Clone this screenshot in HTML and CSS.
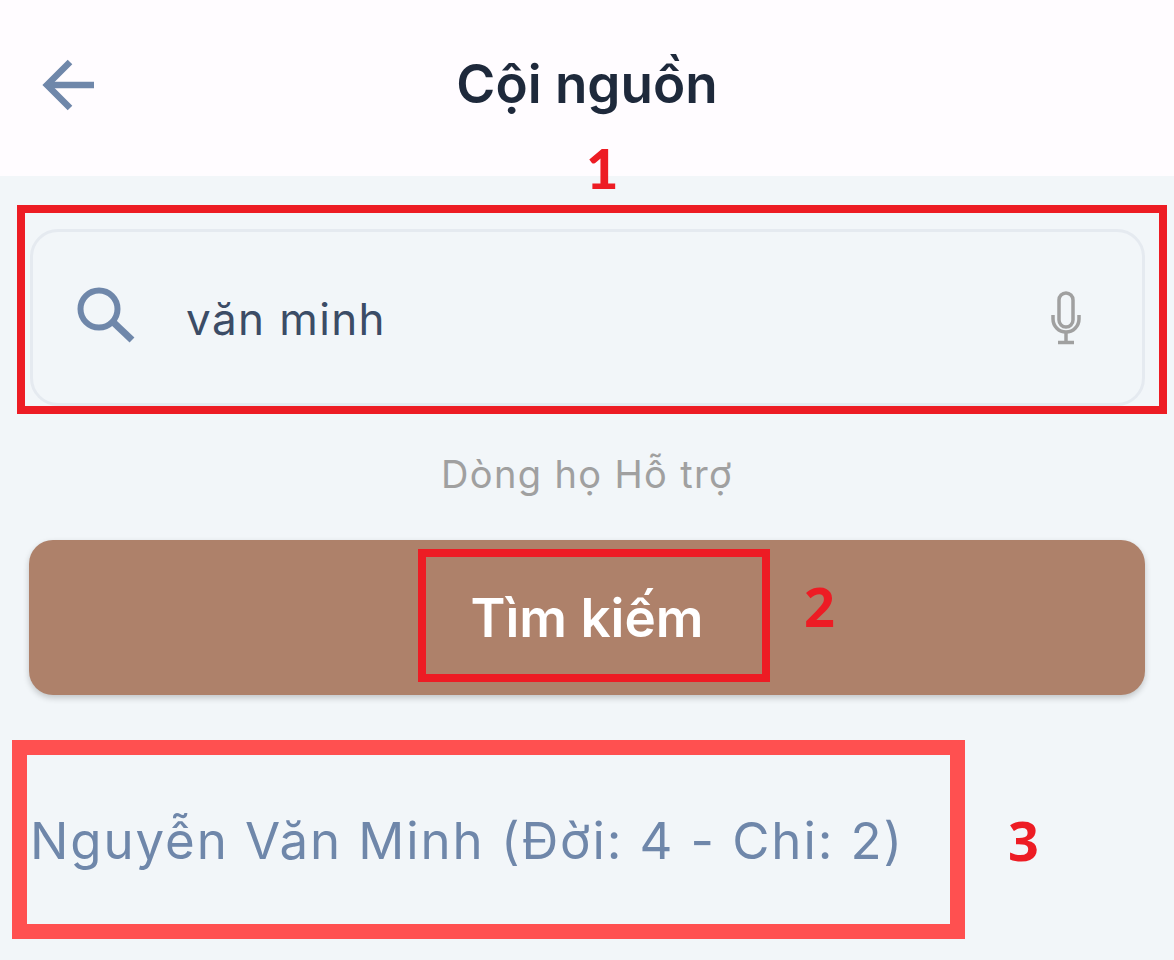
FILE: index.html
```html
<!DOCTYPE html>
<html lang="en">
<head>
  <meta charset="UTF-8" />
  <title>Cội nguồn</title>
  <meta name="viewport" content="width=device-width, initial-scale=1.0" />
  <link rel="stylesheet" href="styles.css">
</head>
<body>

<div class="app">
  <header class="app-bar">
    <svg class="back-icon" viewBox="0 0 56 56" fill="none" stroke="#6f87aa" stroke-width="6.5">
      <path d="M29 4 L6 27 L29 50" />
      <path d="M6 27 H53" />
    </svg>
    <h1 class="title">Cội nguồn</h1>
  </header>

  <main class="content">
    <div class="search-box">
      <svg class="search-icon" viewBox="0 0 58 58" fill="none" stroke="#6f87aa">
        <circle cx="22" cy="22" r="18.5" stroke-width="6" />
        <path d="M36 35 L55 53" stroke-width="7" />
      </svg>
      <span class="search-text">văn minh</span>
      <svg class="mic-icon" viewBox="0 0 32 54" fill="none" stroke="#a0a0a0" stroke-width="3.5">
        <rect x="9" y="2" width="14" height="34" rx="7" />
        <path d="M3 24 V28 A13 13 0 0 0 29 28 V24" />
        <path d="M16 42 V51" />
        <path d="M8 51.5 H24" />
      </svg>
    </div>

    <p class="clan-name">Dòng họ Hỗ trợ</p>

    <button class="search-btn">Tìm kiếm</button>

    <p class="result">Nguyễn Văn Minh (Đời: 4 - Chi: 2)</p>
  </main>

  <!-- red notes drawn on top of the screen -->
  <div class="mark mark-1"></div>
  <div class="mark mark-2"></div>
  <div class="mark mark-3"></div>
  <span class="num num-1">1</span>
  <span class="num num-2">2</span>
  <span class="num num-3">3</span>
</div>

</body>
</html>
```

FILE: styles.css
```css
* {
  box-sizing: border-box;
}
body {
  margin: 0;
  background: #f2f6f9;
  font-family: 'Inter', sans-serif;
}
.app {
  position: relative;
  width: 1174px;
  height: 960px;
  overflow: hidden;
}
.app-bar {
  height: 176px;
  background: #fffcff;
  display: flex;
  align-items: center;
  justify-content: center;
  position: relative;
  padding-bottom: 8px;
}
.back-icon {
  position: absolute;
  left: 41px;
  top: 58px;
  width: 56px;
  height: 56px;
}
.title {
  margin: 0;
  font-size: 53px;
  font-weight: 600;
  color: #1e293b;
}
.content {
  padding: 53px 29px 0 29px;
}
.search-box {
  height: 177px;
  margin-left: 1px;
  border: 3px solid #e5eaf0;
  border-radius: 28px;
  display: flex;
  align-items: center;
  padding: 0 60px 0 44px;
}
.search-icon {
  width: 58px;
  height: 58px;
  margin-top: -3px;
}
.search-text {
  flex: 1;
  margin-left: 51px;
  margin-top: 3px;
  font-size: 44px;
  font-weight: 400;
  color: #3b4c66;
  letter-spacing: 1.4px;
}
.mic-icon {
  width: 32px;
  height: 54px;
}
.clan-name {
  margin: 45px 0 0 0;
  text-align: center;
  font-size: 38px;
  line-height: 46px;
  color: #a0a0a0;
  letter-spacing: 1.35px;
}
.search-btn {
  display: block;
  width: 100%;
  height: 155px;
  margin-top: 43px;
  border: none;
  border-radius: 24px;
  background: #ae816a;
  color: white;
  font-family: 'Inter', sans-serif;
  font-size: 53px;
  font-weight: 600;
  box-shadow: 0 3px 6px rgba(0,0,0,0.2);
}
.result {
  margin: 116px 0 0 1px;
  font-size: 51px;
  line-height: 60px;
  color: #6f87aa;
  letter-spacing: 1.9px;
  white-space: nowrap;
}

/* Annotations */
.mark {
  position: absolute;
  border: 8px solid #ed1c24;
}
.mark-1 {
  left: 17px;
  top: 205px;
  width: 1150px;
  height: 209px;
}
.mark-2 {
  left: 418px;
  top: 549px;
  width: 352px;
  height: 133px;
}
.mark-3 {
  left: 12px;
  top: 740px;
  width: 953px;
  height: 199px;
  border: 15px solid #ff5050;
}
.num {
  position: absolute;
  font-family: 'Open Sans', sans-serif;
  font-weight: 700;
  font-size: 54px;
  line-height: 60px;
  color: #ed1c24;
}
.num-1 {
  left: 586px;
  top: 138px;
  font-family: 'Lato', sans-serif;
  font-weight: 900;
  font-size: 56px;
}
.num-2 {
  left: 804px;
  top: 576px;
}
.num-3 {
  left: 1008px;
  top: 810px;
}
```
